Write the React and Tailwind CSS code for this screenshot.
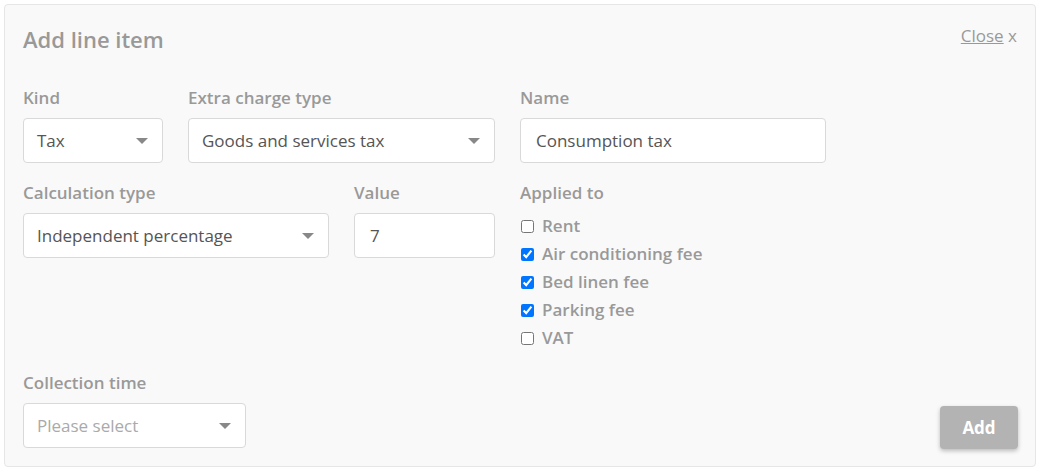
import { useState } from 'react';

function Caret() {
  return (
    <svg width="12" height="6" viewBox="0 0 12 6" className="shrink-0">
      <path d="M0 0 L12 0 L6 6 Z" fill="#888888" />
    </svg>
  );
}

function Select({ value, placeholder, width }) {
  return (
    <div
      className={`${width} h-[45px] flex items-center justify-between pl-[13px] pr-[14px] bg-white border border-[#d9d9d9] rounded-[4px] text-[17px]`}
    >
      <span className={value ? 'text-[#555]' : 'text-[#aaa]'}>{value || placeholder}</span>
      <Caret />
    </div>
  );
}

function TextInput({ value, width }) {
  return (
    <div
      className={`${width} h-[45px] flex items-center px-[15px] bg-white border border-[#d9d9d9] rounded-[4px] text-[17px] text-[#555]`}
    >
      {value}
    </div>
  );
}

function Label({ children }) {
  return <div className="h-[24px] mb-[8px] text-[17px] font-semibold text-[#999] leading-[24px]">{children}</div>;
}

function Check({ label, checked }) {
  const [on, setOn] = useState(checked);
  return (
    <label className="flex items-center h-[28px] gap-[8px] text-[17px] font-semibold text-[#999]">
      <input type="checkbox" checked={on} onChange={() => setOn(!on)} className="w-[13px] h-[13px] m-0 ml-[1px]" />
      {label}
    </label>
  );
}

export default function App() {
  return (
    <div className="bg-white min-h-screen pl-[4px] pr-[1px] pt-[4px]" style={{ fontFamily: '"Open Sans", sans-serif' }}>
      <div className="border border-[#e6e6e6] rounded-[4px] bg-[#f9f9f9] pl-[18px] pr-[17px] pt-[20px] pb-[18px]">
        <div className="flex justify-between items-start">
          <h2 className="text-[22px] font-semibold text-[#999] leading-[28px]">Add line item</h2>
          <div className="text-[17px] text-[#999] leading-[22px] mt-[0px] mr-[1px]">
            <span className="underline">Close</span> x
          </div>
        </div>

        <div className="flex gap-[25px] mt-[33px]">
          <div>
            <Label>Kind</Label>
            <Select value="Tax" width="w-[140px]" />
          </div>
          <div>
            <Label>Extra charge type</Label>
            <Select value="Goods and services tax" width="w-[307px]" />
          </div>
          <div>
            <Label>Name</Label>
            <TextInput value="Consumption tax" width="w-[306px]" />
          </div>
        </div>

        <div className="flex gap-[25px] mt-[18px]">
          <div>
            <Label>Calculation type</Label>
            <Select value="Independent percentage" width="w-[306px]" />
          </div>
          <div>
            <Label>Value</Label>
            <TextInput value="7" width="w-[141px]" />
          </div>
          <div>
            <div className="h-[24px] mb-[7px] text-[17px] font-semibold text-[#999] leading-[24px]">Applied to</div>
            <Check label="Rent" checked={false} />
            <Check label="Air conditioning fee" checked />
            <Check label="Bed linen fee" checked />
            <Check label="Parking fee" checked />
            <Check label="VAT" checked={false} />
          </div>
        </div>

        <div className="flex justify-between items-end mt-[19px]">
          <div>
            <Label>Collection time</Label>
            <Select placeholder="Please select" width="w-[223px]" />
          </div>
          <button className="w-[78px] h-[43px] mb-[-1px] rounded-[4px] bg-[#b3b3b3] text-white text-[17px] font-bold shadow-[0_2px_4px_rgba(0,0,0,0.25)]">
            Add
          </button>
        </div>
      </div>
    </div>
  );
}
